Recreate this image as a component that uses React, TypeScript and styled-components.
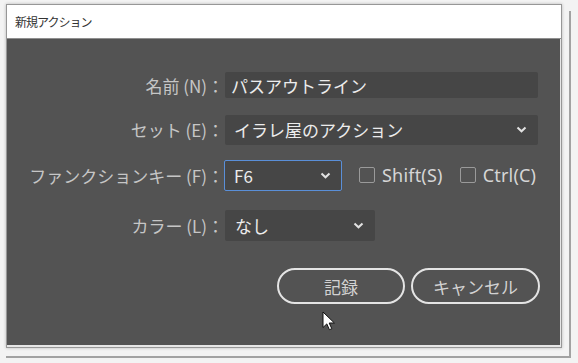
import { FC } from 'react';
import styled, { createGlobalStyle } from 'styled-components';

const GlobalStyle = createGlobalStyle`
  html, body {
    margin: 0;
    padding: 0;
    background: #f3f3f3;
  }
  body {
    font-family: 'Noto Sans CJK JP', 'Noto Sans', sans-serif;
  }
`;

const Stage = styled.div`
  position: relative;
  width: 578px;
  height: 363px;
  padding: 4px 0 0 6px;
  box-sizing: border-box;
  overflow: hidden;
`;

// edge of the window lying behind the dialog
const BackFrame = styled.div`
  position: absolute;
  left: 6px;
  top: 11px;
  width: 563px;
  height: 345px;
  border-right: 2px solid #a2a2a2;
  border-bottom: 2px solid #a2a2a2;
`;

const Dialog = styled.div`
  position: relative;
  width: 556px;
  height: 344px;
  box-sizing: border-box;
  border: 1px solid #979797;
  background: #e6e6e6;
  box-shadow: 0 0 3px rgba(0, 0, 0, 0.25);
  display: flex;
  flex-direction: column;
`;

const TitleBar = styled.div`
  height: 33px;
  flex: none;
  display: flex;
  align-items: center;
  padding-left: 8px;
  background: #ffffff;
  border-bottom: 1px solid #8f8f8f;
  color: #333333;
  font-size: 12px;
  letter-spacing: -1px;
`;

const Body = styled.div`
  position: relative;
  flex: 1;
  margin: 0 1px 2px 0;
  background: #535353;
  padding-top: 23px;
  display: flex;
  flex-direction: column;
`;

const Row = styled.div<{ $h: number }>`
  display: grid;
  grid-template-columns: 217px auto;
  column-gap: 1px;
  align-items: center;
  height: ${({ $h }) => $h}px;
`;

const Label = styled.label`
  text-align: right;
  color: #c6c6c6;
  font-size: 17px;
  white-space: nowrap;
`;

const Field = styled.div<{ $w: number; $h: number; $focus?: boolean; $pad?: number }>`
  position: relative;
  box-sizing: border-box;
  width: ${({ $w }) => $w}px;
  height: ${({ $h }) => $h}px;
  display: flex;
  align-items: center;
  justify-content: space-between;
  padding: 0 10px 0 ${({ $pad = 8 }) => $pad}px;
  background: #464646;
  color: #ececec;
  font-size: 17px;
  border: 1px solid ${({ $focus }) => ($focus ? '#5a8fd8' : 'transparent')};
  border-radius: 2px;
  margin-left: ${({ $focus }) => ($focus ? '-1px' : '0')};
  white-space: nowrap;
`;

const Chevron: FC = () => (
  <svg width="11" height="7" viewBox="0 0 11 7">
    <path d="M1.5 1.5l4 3.8 4-3.8" fill="none" stroke="#e2e2e2" strokeWidth="2" />
  </svg>
);

const Inline = styled.div`
  display: flex;
  align-items: center;
`;

const Check = styled.span<{ $gap: number }>`
  display: inline-flex;
  align-items: center;
  gap: 7px;
  margin-left: ${({ $gap }) => $gap}px;
  color: #d6d6d6;
  font-size: 18px;
  letter-spacing: 0.2px;
  font-family: 'Noto Sans', 'Noto Sans CJK JP', sans-serif;
`;

const Box = styled.span`
  width: 16px;
  height: 16px;
  box-sizing: border-box;
  border: 1px solid #9a9a9a;
  border-radius: 2px;
`;

const Buttons = styled.div`
  display: flex;
  justify-content: flex-end;
  gap: 6px;
  padding-right: 20px;
  margin-top: 17px;
`;

const PillButton = styled.button<{ $w: number }>`
  width: ${({ $w }) => $w}px;
  height: 36px;
  box-sizing: border-box;
  border: 2px solid #e4e4e4;
  border-radius: 18px;
  background: transparent;
  color: #d2d2d2;
  font-family: 'Noto Sans CJK JP', sans-serif;
  font-size: 17px;
  padding: 0;
`;

const Pointer = styled.svg`
  position: absolute;
  left: 315px;
  top: 272px;
`;

export default function App() {
  return (
    <>
      <GlobalStyle />
      <Stage>
        <BackFrame />
        <Dialog>
          <TitleBar>新規アクション</TitleBar>
          <Body>
            <Row $h={46}>
              <Label>名前 (N)：</Label>
              <Field $w={313} $h={26} $pad={5}>
                パスアウトライン
              </Field>
            </Row>
            <Row $h={43}>
              <Label>セット (E)：</Label>
              <Field $w={313} $h={30}>
                イラレ屋のアクション
                <Chevron />
              </Field>
            </Row>
            <Row $h={48}>
              <Label>ファンクションキー (F)：</Label>
              <Inline>
                <Field $w={118} $h={31} $focus $pad={9}>
                  F6
                  <Chevron />
                </Field>
                <Check $gap={17}>
                  <Box />
                  Shift(S)
                </Check>
                <Check $gap={17}>
                  <Box />
                  Ctrl(C)
                </Check>
              </Inline>
            </Row>
            <Row $h={52}>
              <Label>カラー (L)：</Label>
              <Field $w={150} $h={31} $pad={9}>
                なし
                <Chevron />
              </Field>
            </Row>
            <Buttons>
              <PillButton $w={128}>記録</PillButton>
              <PillButton $w={129}>キャンセル</PillButton>
            </Buttons>
            <Pointer width="13" height="20" viewBox="0 0 13 20">
              <path
                d="M1 1v15.5l3.8-3.6 2.6 5.8 2.4-1-2.6-5.7H12.4z"
                fill="#ffffff"
                stroke="#111111"
                strokeWidth="1"
                strokeLinejoin="round"
              />
            </Pointer>
          </Body>
        </Dialog>
      </Stage>
    </>
  );
}
